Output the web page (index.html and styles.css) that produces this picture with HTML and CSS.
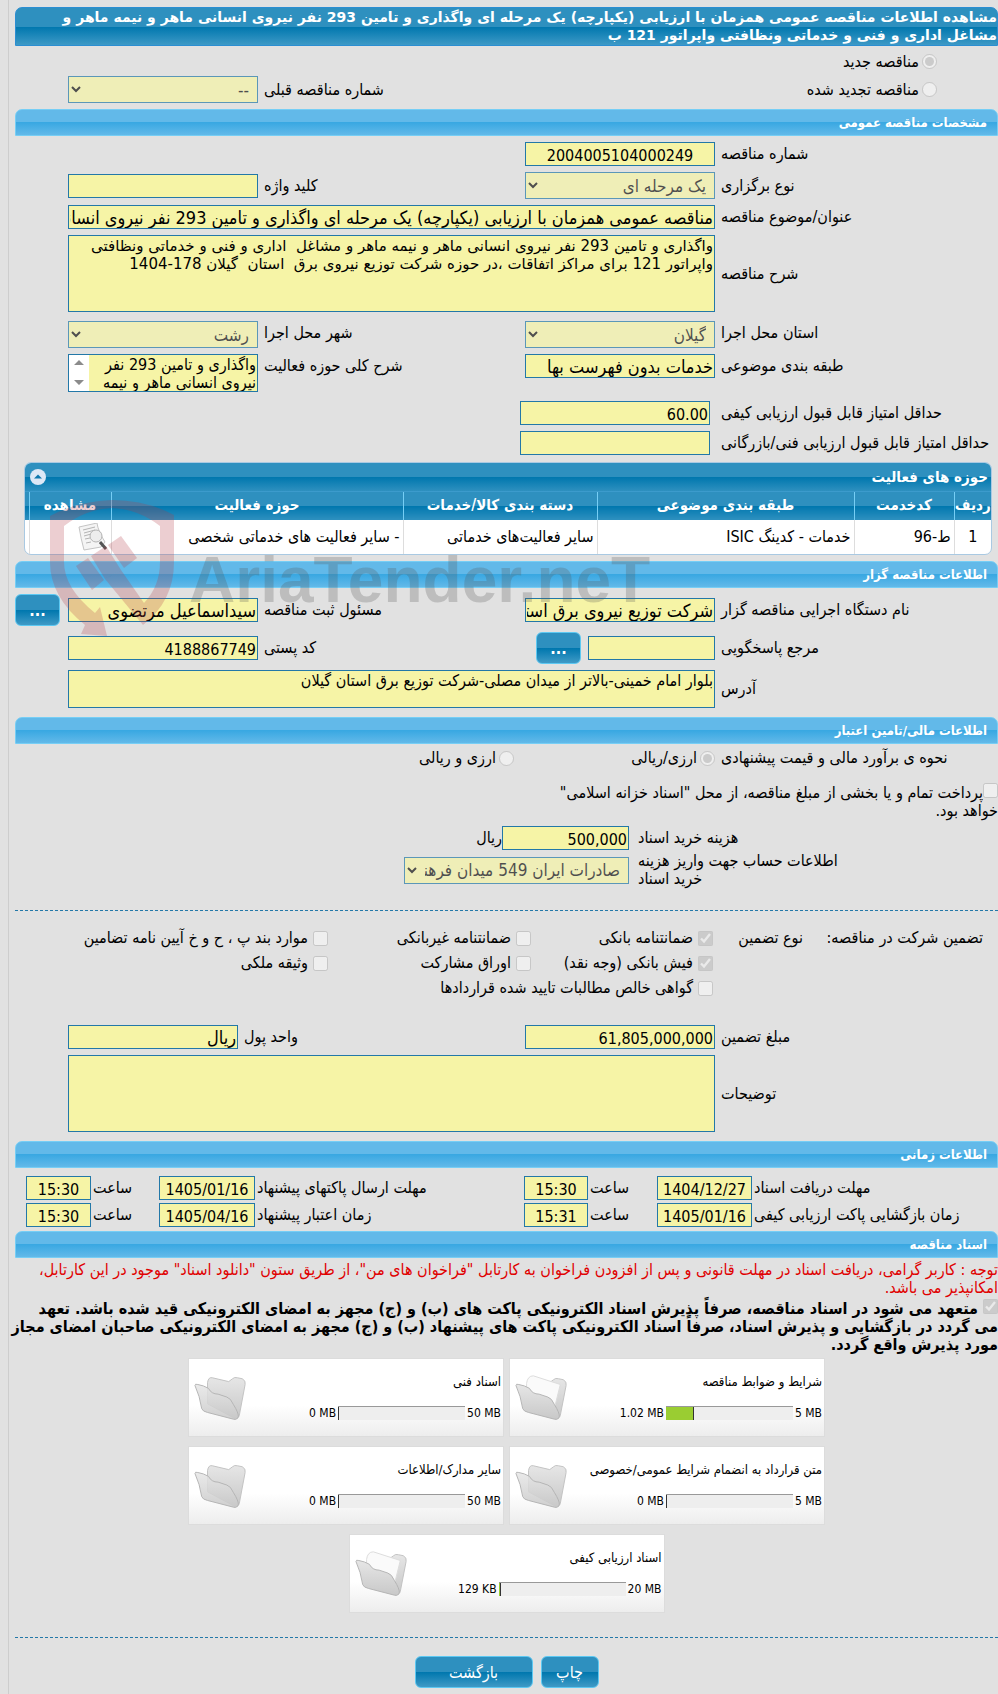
FILE: index.html
```
<!DOCTYPE html>
<html lang="fa" dir="rtl">
<head>
<meta charset="utf-8">
<title>مشاهده اطلاعات مناقصه عمومی</title>
<link rel="stylesheet" href="styles.css">
</head>
<body>
<svg class="defs" width="0" height="0" aria-hidden="true">
  <defs>
    <linearGradient id="folderFill" x1="0" y1="0" x2="0" y2="1"><stop offset="0" stop-color="#e6e6e6"/><stop offset="1" stop-color="#c8c8c8"/></linearGradient>
    <symbol id="folder-empty" viewBox="0 0 56 48">
      <path d="M14 8 Q15 2 19 3 L36 7 L40 4 Q42 2 45 3 L50 4 Q54 6 53 10 L47 42 Q46 46 42 45 L14 30 Z" fill="url(#folderFill)" stroke="#c2c2c2"/>
      <path d="M1 11 Q1 9 4 10 Q10 11 15 14 Q18 20 25 20 L34 23 Q38 24 41 31 Q46 39 46 43 Q45 47 41 46 L14 39 Q9 38 8 35 Q6 22 1 11 Z" fill="url(#folderFill)" fill-opacity=".85" stroke="#b3b3b3"/>
    </symbol>
    <symbol id="folder-full" viewBox="0 0 56 48">
      <path d="M14 14 L36 8 L40 5 Q42 3 45 4 L50 5 Q54 7 53 11 L47 42 Q46 46 42 45 L14 30 Z" fill="url(#folderFill)" stroke="#c2c2c2"/>
      <path d="M12 9 Q13 1 19 1 L47 10 L41 34 L12 24 Z" fill="#fafafa" stroke="#dcdcdc"/>
      <path d="M1 11 Q1 9 4 10 Q10 11 15 14 Q18 20 25 20 L34 23 Q38 24 41 31 Q46 39 46 43 Q45 47 41 46 L14 39 Q9 38 8 35 Q6 22 1 11 Z" fill="url(#folderFill)" stroke="#b3b3b3"/>
    </symbol>
  </defs>
</svg>
<form class="page">
  <h1 class="title">مشاهده اطلاعات مناقصه عمومی همزمان با ارزیابی (یکپارچه) یک مرحله ای واگذاری و تامین 293 نفر نیروی انسانی ماهر و نیمه ماهر و<br>مشاغل اداری و فنی و خدماتی ونظافتی واپراتور 121 ب</h1>

  <div class="kind">
    <label class="opt"><input type="radio" name="kind" checked disabled>مناقصه جدید</label>
    <div class="form">
      <label class="opt first"><input type="radio" name="kind" disabled>مناقصه تجدید شده</label>
      <label class="lab second" for="prev">شماره مناقصه قبلی</label>
      <select id="prev" disabled><option>--</option></select>
    </div>
  </div>

  <h2 class="section">مشخصات مناقصه عمومی</h2>
  <div class="form spec">
    <label class="lab" for="num">شماره مناقصه</label>
    <input class="box center" id="num" readonly value="2004005104000249">
    <label class="lab row" for="type">نوع برگزاری</label>
    <select id="type" disabled><option>یک مرحله ای</option></select>
    <label class="lab" for="kw">کلید واژه</label>
    <input class="box" id="kw" readonly>
    <label class="lab row" for="subj">عنوان/موضوع مناقصه</label>
    <input class="box wide words" id="subj" readonly value="مناقصه عمومی همزمان با ارزیابی (یکپارچه) یک مرحله ای واگذاری و تامین 293 نفر نیروی انسانی ماهر و نیمه ماهر">
    <label class="lab row" for="desc">شرح مناقصه</label>
    <textarea class="box wide tall body-text" id="desc" readonly>واگذاری و تامین 293 نفر نیروی انسانی ماهر و نیمه ماهر و مشاغل  اداری و فنی و خدماتی ونظافتی
واپراتور 121 برای مراکز اتفاقات ،در حوزه شرکت توزیع نیروی برق  استان  گیلان 178-1404</textarea>
  </div>
  <div class="form place">
    <label class="lab" for="prov">استان محل اجرا</label>
    <select id="prov" disabled><option>گیلان</option></select>
    <label class="lab" for="city">شهر محل اجرا</label>
    <select id="city" disabled><option>رشت</option></select>
    <label class="lab row" for="cat">طبقه بندی موضوعی</label>
    <input class="box words" id="cat" readonly value="خدمات بدون فهرست بها">
    <label class="lab" for="field">شرح کلی حوزه فعالیت</label>
    <div class="scrollbox">
      <textarea class="box" id="field" readonly>واگذاری و تامین 293 نفر نیروی انسانی ماهر و نیمه</textarea>
      <span class="bar" aria-hidden="true"><svg width="10" height="28" viewBox="0 0 10 28"><path d="M0 6 5 1 10 6ZM0 21H10L5 26Z" fill="#8b8b8b"/></svg></span>
    </div>
  </div>
  <div class="form score">
    <label class="lab" for="q">حداقل امتیاز قابل قبول ارزیابی کیفی</label>
    <input class="box" id="q" readonly value="60.00">
    <label class="lab row" for="t">حداقل امتیاز قابل قبول ارزیابی فنی/بازرگانی</label>
    <input class="box" id="t" readonly>
  </div>

  <div class="panel">
    <div class="panel-head">
      <span>حوزه های فعالیت</span>
      <button type="button" class="fold" aria-label="بستن"><svg width="16" height="16" viewBox="0 0 16 16"><circle cx="8" cy="8" r="8" fill="#dde8f6"/><path d="M4 9.500 8 5.500 12 9.500Z" fill="#0f77ad"/></svg></button>
    </div>
    <table>
      <thead><tr><th class="c1">ردیف</th><th class="c2">کدخدمت</th><th class="c3">طبقه بندی موضوعی</th><th class="c4">دسته بندی کالا/خدمات</th><th>حوزه فعالیت</th><th class="c6">مشاهده</th><th class="c7"></th></tr></thead>
      <tbody><tr><td class="mid">1</td><td>ط-96</td><td>خدمات - کدینگ ISIC</td><td>سایر فعالیت‌های خدماتی</td><td>- سایر فعالیت های خدماتی شخصی</td>
      <td><svg class="view" width="30" height="28" viewBox="0 0 30 28"><path d="M1 4 19 0Q20 8 27 19L23 24 6 27Q3 16 1 4Z" fill="#f4f4f4" stroke="#c4c4c4"/><path d="M5 7 17 4M6 10 17 7M6 13 13 11M7 16 12 15M8 20 13 19" stroke="#b4b4b4"/><circle cx="18" cy="13" r="6" fill="#ececec" fill-opacity=".9" stroke="#b4b4b4"/><path d="M22 19 28 26" stroke="#555" stroke-width="3"/></svg></td><td></td></tr></tbody>
    </table>
    <svg class="mark" width="640" height="150" viewBox="0 0 640 150" aria-hidden="true">
      <g fill="#b43c46" fill-opacity=".25">
        <path d="M0 16Q28 1 62 0 96 0 124 15V62Q124 101 93 125L55 79 71 70 94 103Q110 86 110 62V26Q88 9 62 8 36 9 14 26V62Q14 88 45 113L50 107 57 136 31 134 35 125Q0 97 0 62Z"/>
        <path d="M41 56 56 46 71 70 55 79Z"/>
        <path d="M26 66 38 58 54 80 42 90Z"/>
        <path d="M58 45 71 36 87 58 74 68Z"/>
      </g>
      <text x="139" y="102" class="mark-text">AriaTender.neT</text>
    </svg>
  </div>

  <h2 class="section">اطلاعات مناقصه گزار</h2>
  <div class="form org">
    <label class="lab" for="org">نام دستگاه اجرایی مناقصه گزار</label>
    <input class="box words" id="org" readonly value="شرکت توزیع نیروی برق استان گیلان">
    <label class="lab" for="reg">مسئول ثبت مناقصه</label>
    <input class="box words" id="reg" readonly value="سیداسماعیل مرتضوی">
    <button type="button" class="btn dots">...</button>
    <label class="lab row" for="resp">مرجع پاسخگویی</label>
    <div class="pair"><input class="box" id="resp" readonly><button type="button" class="btn dots">...</button></div>
    <label class="lab" for="zip">کد پستی</label>
    <input class="box" id="zip" readonly value="4188867749">
    <label class="lab row" for="addr">آدرس</label>
    <textarea class="box wide" id="addr" readonly>بلوار امام خمینی-بالاتر از میدان مصلی-شرکت توزیع برق استان گیلان</textarea>
  </div>

  <h2 class="section">اطلاعات مالی/تامین اعتبار</h2>
  <div class="form money">
    <span class="lab">نحوه ی برآورد مالی و قیمت پیشنهادی</span>
    <div class="opts"><label class="opt"><input type="radio" name="cur" checked disabled>ارزی/ریالی</label><label class="opt"><input type="radio" name="cur" disabled>ارزی و ریالی</label></div>
  </div>
  <label class="treasury"><input type="checkbox" disabled>پرداخت تمام و یا بخشی از مبلغ مناقصه، از محل "اسناد خزانه اسلامی" خواهد بود.</label>
  <div class="cost">
    <label class="lab" for="cost">هزینه خرید اسناد</label>
    <div class="pair"><input class="box" id="cost" readonly value="500,000"><span>ریال</span></div>
    <label class="lab account" for="acc"><span>اطلاعات حساب جهت واریز هزینه<br>خرید اسناد</span></label>
    <select id="acc" disabled><option>صادرات ایران 549 میدان فرهنگ</option></select>
  </div>
  <hr>
  <div class="guar">
    <span>تضمین شرکت در مناقصه:</span><span>نوع تضمین</span>
    <div class="checks">
      <label class="opt"><input type="checkbox" checked disabled>ضمانتنامه بانکی</label>
      <label class="opt"><input type="checkbox" disabled>ضمانتنامه غیربانکی</label>
      <label class="opt"><input type="checkbox" disabled>موارد بند پ ، ح و خ آیین نامه تضامین</label>
      <label class="opt"><input type="checkbox" checked disabled>فیش بانکی (وجه نقد)</label>
      <label class="opt"><input type="checkbox" disabled>اوراق مشارکت</label>
      <label class="opt"><input type="checkbox" disabled>وثیقه ملکی</label>
      <label class="opt long"><input type="checkbox" disabled>گواهی خالص مطالبات تایید شده قراردادها</label>
    </div>
  </div>
  <div class="form amount">
    <label class="lab" for="amt">مبلغ تضمین</label>
    <input class="box" id="amt" readonly value="61,805,000,000">
    <label class="lab" for="unit">واحد پول</label>
    <input class="box words" id="unit" readonly value="ریال">
    <label class="lab row" for="note">توضیحات</label>
    <textarea class="box wide tall" id="note" readonly></textarea>
  </div>

  <h2 class="section">اطلاعات زمانی</h2>
  <div class="times">
    <label class="lab" for="d1">مهلت دریافت اسناد</label><input class="box center" id="d1" readonly value="1404/12/27">
    <label class="lab" for="h1">ساعت</label><input class="box center" id="h1" readonly value="15:30">
    <label class="lab" for="d2">مهلت ارسال پاکتهای پیشنهاد</label><input class="box center" id="d2" readonly value="1405/01/16">
    <label class="lab" for="h2">ساعت</label><input class="box center" id="h2" readonly value="15:30">
    <label class="lab" for="d3">زمان بازگشایی پاکت ارزیابی کیفی</label><input class="box center" id="d3" readonly value="1405/01/16">
    <label class="lab" for="h3">ساعت</label><input class="box center" id="h3" readonly value="15:31">
    <label class="lab" for="d4">زمان اعتبار پیشنهاد</label><input class="box center" id="d4" readonly value="1405/04/16">
    <label class="lab" for="h4">ساعت</label><input class="box center" id="h4" readonly value="15:30">
  </div>

  <h2 class="section">اسناد مناقصه</h2>
  <p class="notice">توجه : کاربر گرامی، دریافت اسناد در مهلت قانونی و پس از افزودن فراخوان به کارتابل "فراخوان های من"، از طریق ستون "دانلود اسناد" موجود در این کارتابل،<br>امکانپذیر می باشد.</p>
  <label class="commit"><input type="checkbox" checked disabled> متعهد می شود در اسناد مناقصه، صرفاً پذیرش اسناد الکترونیکی پاکت های (ب) و (ج) مجهز به امضای الکترونیکی قید شده باشد. تعهد<br>می گردد در بازگشایی و پذیرش اسناد، صرفاً اسناد الکترونیکی پاکت های پیشنهاد (ب) و (ج) مجهز به امضای الکترونیکی صاحبان امضای مجاز<br>مورد پذیرش واقع گردد.</label>

  <div class="files">
    <article class="card"><h3>شرایط و ضوابط مناقصه</h3><div class="usage"><span>5 MB</span><span class="meter"><i style="width:22%"></i></span><span>1.02 MB</span></div><svg class="folder" width="54" height="48"><use href="#folder-full"/></svg></article>
    <article class="card"><h3>اسناد فنی</h3><div class="usage"><span>50 MB</span><span class="meter"><i style="width:0"></i></span><span>0 MB</span></div><svg class="folder" width="54" height="48"><use href="#folder-empty"/></svg></article>
    <article class="card"><h3>متن قرارداد به انضمام شرایط عمومی/خصوصی</h3><div class="usage"><span>5 MB</span><span class="meter"><i style="width:0"></i></span><span>0 MB</span></div><svg class="folder" width="54" height="48"><use href="#folder-empty"/></svg></article>
    <article class="card"><h3>سایر مدارک/اطلاعات</h3><div class="usage"><span>50 MB</span><span class="meter"><i style="width:0"></i></span><span>0 MB</span></div><svg class="folder" width="54" height="48"><use href="#folder-empty"/></svg></article>
    <article class="card"><h3>اسناد ارزیابی کیفی</h3><div class="usage"><span>20 MB</span><span class="meter"><i style="width:2%"></i></span><span>129 KB</span></div><svg class="folder" width="54" height="48"><use href="#folder-full"/></svg></article>
  </div>
  <hr>
  <div class="actions"><button type="button" class="btn print">چاپ</button><button type="button" class="btn back">بازگشت</button></div>
</form>
</body>
</html>
```
FILE: styles.css
```
* { box-sizing: border-box; }
body {
  margin: 0;
  background: #e1e1e1;
  color: #000;
  font: 16px/18px "DejaVu Sans Condensed", "DejaVu Sans", sans-serif;
  overflow-x: hidden;
}
.defs { position: absolute; }
.page {
  margin-left: 8px;
  border-left: 1px solid #cdcdcd;
  padding: 7px 0 6px 6px;
}
.title {
  margin: 0;
  height: 39px;
  font-family: "DejaVu Sans", sans-serif;
  font-size: 14px;
  line-height: 18px;
  white-space: nowrap;
  color: #fff;
  border: 1px solid #2b8ed2;
  border-radius: 7px 7px 0 0;
  background: linear-gradient(#2e90bf 0 50%, #0077ae 51%, #3d99c6);
}
.section {
  margin: 0;
  height: 27px;
  padding: 0 10px;
  font-size: 13px;
  line-height: 25px;
  color: #fff;
  border: 1px solid #76cef5;
  border-radius: 7px 7px 0 0;
  background: linear-gradient(#62b9e9 0 48%, #39a8e2 50%, #62b9e9);
}
input, select, textarea, button { font-family: inherit; margin: 0; }
.box {
  display: block;
  width: 100%;
  min-width: 0;
  height: 24px;
  padding: 2px 1px 0;
  border: 1px solid #2378a8;
  border-radius: 0;
  background: #f6f4a6;
  color: #000;
  font-size: 16px;
  outline: none;
}
textarea.box { line-height: 18px; padding: 1px; resize: none; height: 38px; overflow: hidden; }
.words { font-size: 18px; padding-top: 0; }
textarea.body-text { font-family: "DejaVu Sans", sans-serif; font-size: 15px; }
.center { text-align: center; }
select {
  width: 100%;
  height: 27px;
  padding: 0 4px;
  border: 1px solid #2378a8;
  border-radius: 0;
  background-color: #f6f4a6;
  color: #111;
  font-size: 17px;
}
input[type=radio], input[type=checkbox] { width: 15px; height: 15px; flex: none; }

.form {
  display: grid;
  grid-template-columns: 277px 190px minmax(0, 1fr) 190px 47px;
  column-gap: 6px;
  row-gap: 6px;
  align-items: center;
}
.lab { text-align: left; white-space: nowrap; }
.row { grid-column: 1; }
.wide { grid-column: 2 / 5; }
textarea.tall { height: 77px; }
.opt { display: flex; align-items: center; gap: 3px; white-space: nowrap; }

.kind { padding: 5px 0 6px; }
.kind > .opt, .opt.first { padding-right: 61px; }
.kind > .opt { height: 21px; margin-bottom: 4px; }
.second { grid-column: 3; }
.spec { padding: 6px 0 9px; }
.place { align-items: start; }
.place .lab { padding-top: 3px; }
.scrollbox { display: grid; grid-template-columns: minmax(0, 1fr) 20px; border: 1px solid #2378a8; }
.scrollbox .box { border: 0; height: 36px; }
.bar { display: grid; place-items: center; background: #fff; }
.score { grid-template-columns: 277px 190px; column-gap: 11px; padding: 9px 0 7px; }

.panel { position: relative; margin: 0 6px 6px 9px; border: 1px solid #a9c9e2; border-radius: 7px; background: #fff; }
.panel-head {
  display: flex; align-items: center; justify-content: space-between;
  height: 29px; padding: 0 3px 0 5px;
  color: #fff; font-weight: bold; font-size: 15px;
  border-radius: 6px 6px 0 0;
  border-bottom: 1px solid #3c9bcc;
  background: linear-gradient(#2e90bf 0 50%, #0077ae 51%, #2e90bf);
}
.fold { padding: 0; border: 0; background: none; height: 16px; display: flex; }
table { width: 100%; border-collapse: collapse; table-layout: fixed; }
th {
  height: 28px; padding: 0 0 3px; color: #fff; font-size: 15px;
  border-left: 1px solid #76cef5;
  background: linear-gradient(#2e90bf 0 50%, #0077ae 51%, #2e90bf);
}
td { height: 34px; padding: 0 3px; font-size: 16px; border-left: 1px solid #ddd; white-space: nowrap; }
th:last-child, td:last-child { border-left: 0; }
.view { display: block; }
.mid { text-align: center; }
.c1 { width: 37px; } .c2 { width: 100px; } .c3 { width: 257px; } .c4 { width: 194px; }
.c6 { width: 82px; } .c7 { width: 4px; }
.mark { position: absolute; left: 25px; top: 37px; pointer-events: none; z-index: 2; direction: ltr; }
.mark-text { font: bold 64px "Liberation Sans", sans-serif; fill: #555; fill-opacity: .25; }

.btn {
  height: 32px;
  padding: 0;
  color: #fff;
  font-size: 16px;
  border: 1px solid #5cc8f2;
  border-radius: 6px;
  background: linear-gradient(#2e90bf 0 50%, #0077ae 51%, #3f9ac6);
}
.dots { width: 45px; flex: none; font-weight: bold; justify-self: end; }
.org { padding: 6px 0 9px; }
.pair { display: flex; align-items: center; gap: 7px; }
.org .pair .box { width: 127px; }
.money { padding: 5px 0 4px; }
.opts { grid-column: 2 / 5; display: grid; grid-template-columns: 201px auto; }
.treasury { display: block; width: 468px; margin: 12px 0 6px; }
.treasury input, .commit input { vertical-align: 0; }
.cost { display: grid; grid-template-columns: 360px 225px; column-gap: 9px; row-gap: 2px; align-items: center; }
.cost .pair { gap: 0; }
.cost .pair .box { width: 127px; }
/* The two-line caption reads from the right, while the block sits against its field. */
.account { display: flex; justify-content: flex-end; }
hr { margin: 22px 0 18px; border: 0; border-top: 1px dashed #2378a8; }
.guar { display: grid; grid-template-columns: 160px 70px minmax(0, 1fr); column-gap: 20px; padding-right: 15px; white-space: nowrap; }
.checks { display: grid; grid-template-columns: 182px 203px auto; row-gap: 7px; }
.long { grid-column: 1 / 4; }
.checks .opt { gap: 5px; }
.amount { grid-template-columns: 277px 190px minmax(0, 1fr) 170px 47px; padding: 28px 0 9px; }
.times { display: grid; grid-template-columns: 244px 95px 65px 64px minmax(0, 1fr) 96px 64px 65px; column-gap: 2px; row-gap: 3px; padding: 8px 0 4px 11px; align-items: center; }
.notice { margin: 3px 0 2px; color: #e00000; white-space: nowrap; }
.commit { display: block; font-weight: bold; white-space: nowrap; }
.files { display: grid; grid-template-columns: 316px 316px; justify-content: center; gap: 9px 5px; margin-top: 4px; padding-bottom: 2px; }
.card {
  display: grid;
  grid-template-columns: minmax(0, 1fr) 56px;
  grid-template-rows: 18px 18px;
  row-gap: 13px;
  height: 79px; padding: 14px 2px 0 5px;
  border: 1px solid #dcdcdc;
  background: linear-gradient(#fff 60%, #ededed);
}
.card h3 { margin: 0; font-size: 13px; font-weight: normal; white-space: nowrap; grid-column: 1; }
.usage { grid-column: 1; display: flex; gap: 2px; font-size: 12px; align-items: center; }
.usage span { direction: ltr; }
.meter { width: 127px; height: 14px; border-top: 1px solid #999; background: #eee; }
.meter i { display: block; height: 13px; background: #9acd32; border-right: 1px solid #333; }
.folder { grid-column: 2; grid-row: 1 / 3; justify-self: end; align-self: end; }
.card:last-child { grid-column: 1 / 3; justify-self: center; width: 316px; }
.actions { display: flex; justify-content: center; gap: 8px; }
.print { width: 58px; } .back { width: 118px; }
```
